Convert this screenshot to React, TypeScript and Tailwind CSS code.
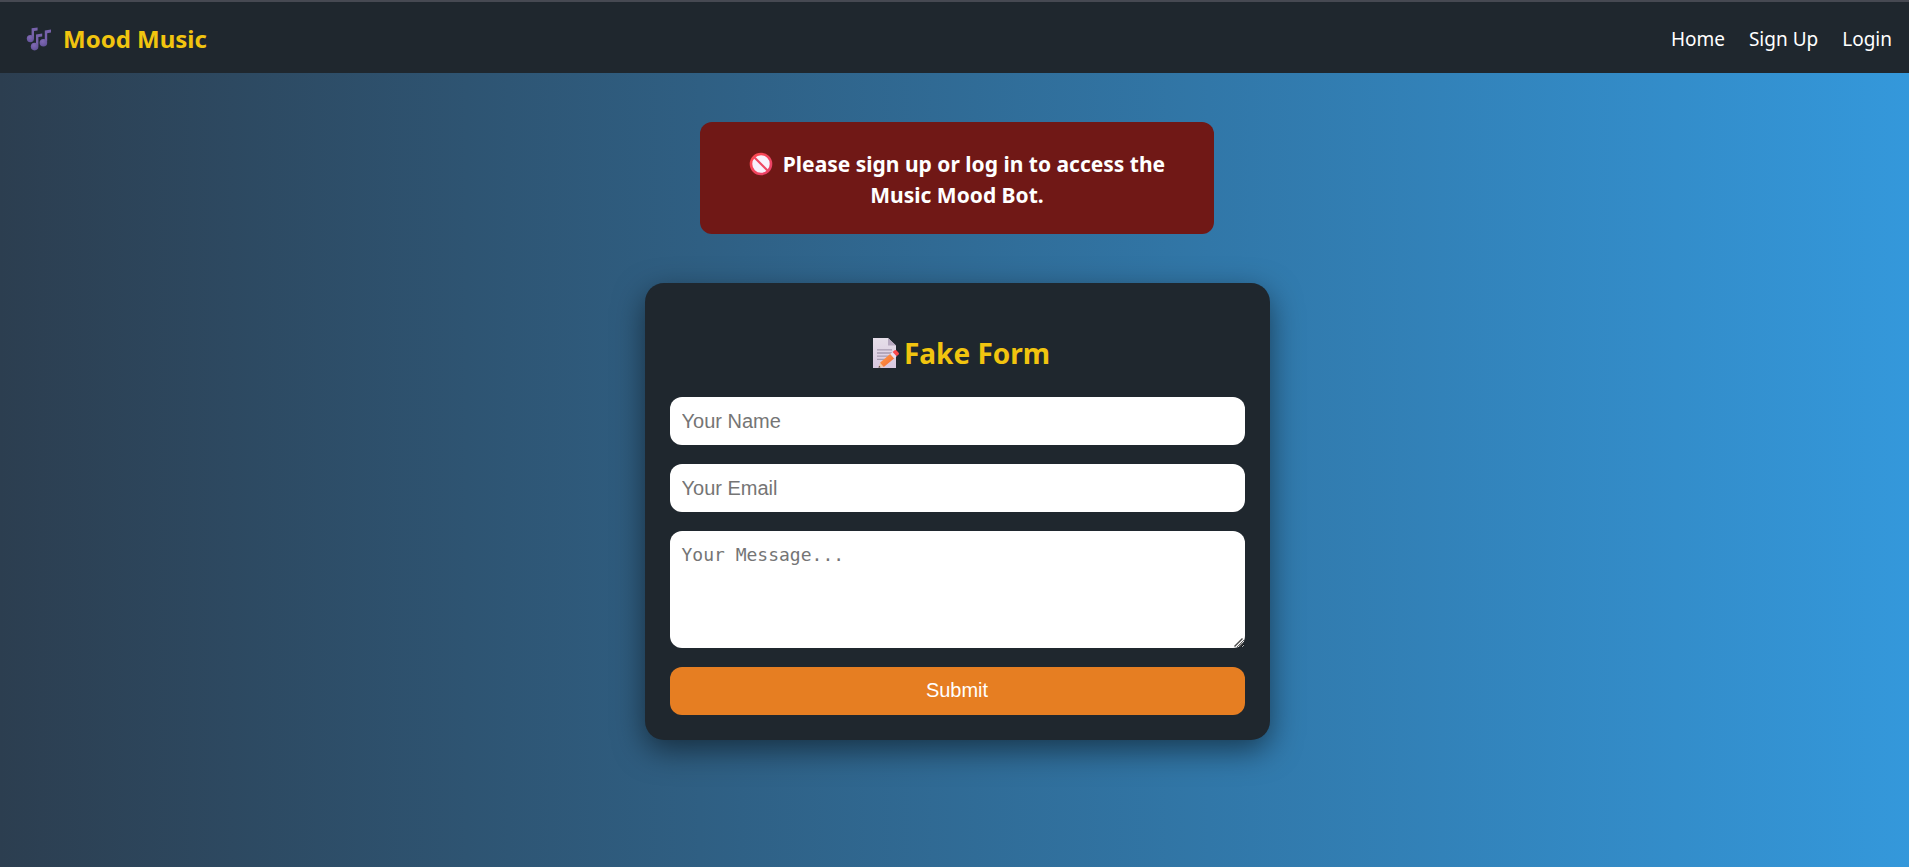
import type { ReactNode } from "react";

function NotesIcon() {
  return (
    <svg viewBox="0 0 26 26" className="h-[26px] w-[26px] shrink-0" aria-hidden="true">
      <defs>
        <radialGradient id="note" cx="0.4" cy="0.3" r="0.8">
          <stop offset="0" stopColor="#8069b4" />
          <stop offset="1" stopColor="#5f5096" />
        </radialGradient>
      </defs>
      <path d="M6.6 2.2 L12.6 1.4 V4.4 L9 5 V12.6 H6.6 Z" fill="#7762ab" />
      <path d="M11 8.4 L17.2 7.4 V10.4 L13.4 11 V19.5 H11 Z" fill="#7762ab" />
      <path d="M19.8 4.6 L26 3.4 V6.4 L22.2 7.2 V15.6 H19.8 Z" fill="#7762ab" />
      <circle cx="5.4" cy="12.6" r="3.6" fill="url(#note)" />
      <circle cx="9.6" cy="20.6" r="3.8" fill="url(#note)" />
      <circle cx="18.4" cy="16.8" r="3.8" fill="url(#note)" />
    </svg>
  );
}

function ProhibitedIcon() {
  return (
    <svg viewBox="0 0 24 24" className="h-6 w-6" aria-hidden="true">
      <defs>
        <linearGradient id="ring" x1="0" y1="0" x2="1" y2="1">
          <stop offset="0" stopColor="#ff4a4d" />
          <stop offset="1" stopColor="#e8406c" />
        </linearGradient>
      </defs>
      <circle cx="12" cy="12" r="10" fill="#f8f1fb" stroke="url(#ring)" strokeWidth="2.6" />
      <path d="M5 5 L19 19" stroke="#ee4660" strokeWidth="2.2" />
    </svg>
  );
}

function MemoIcon() {
  return (
    <svg viewBox="0 0 28 32" className="h-8 w-7 shrink-0" aria-hidden="true">
      <defs>
        <linearGradient id="paper" x1="0" y1="0" x2="0" y2="1">
          <stop offset="0" stopColor="#e6dfe9" />
          <stop offset="1" stopColor="#d9c8e0" />
        </linearGradient>
        <linearGradient id="pencil" x1="0" y1="0" x2="1" y2="1">
          <stop offset="0" stopColor="#ffa04a" />
          <stop offset="1" stopColor="#f4652f" />
        </linearGradient>
      </defs>
      <path d="M1 1 H16 L24 8.5 V31 H1 Z" fill="url(#paper)" />
      <path d="M16 1 V8.5 H24 Z" fill="#b7a9c0" />
      <path d="M5 12.8 H20 M5 16 H20 M5 19.2 H17 M5 22.4 H13" stroke="#a79bb0" strokeWidth="1.3" />
      <path d="M6.5 30.8 L8 26 L11.5 29.8 Z" fill="#f5c9a0" />
      <path d="M6.5 30.8 L7.1 28.8 L8.6 30.3 Z" fill="#4c3a45" />
      <path d="M8 25.8 L18.4 16.8 L22.4 21.2 L11.8 30 Z" fill="url(#pencil)" />
      <path d="M18.2 17 L20.6 14.9 L24.6 19.3 L22.2 21.4 Z" fill="#eadff0" />
      <path d="M20.6 14.9 L22.6 13.2 Q23.6 12.5 24.6 13.4 L26.8 15.9 Q27.4 16.9 26.6 17.6 L24.6 19.3 Z" fill="#fb4a4c" />
    </svg>
  );
}

function ResizeGrip() {
  return (
    <svg
      viewBox="0 0 12 12"
      className="pointer-events-none absolute right-0 bottom-0 h-3 w-3"
      aria-hidden="true"
    >
      <path d="M1.5 10.5 L9.5 2.5" stroke="#4a4a4a" strokeWidth="1.4" />
      <path d="M6.5 10.5 L10 7" stroke="#4a4a4a" strokeWidth="1.4" />
    </svg>
  );
}

function NavLink({ children }: { children: ReactNode }) {
  return (
    <a href="#" className="text-white hover:underline">
      {children}
    </a>
  );
}

const fieldClass =
  "block w-full rounded-xl bg-white px-3 text-black outline-none placeholder:text-[#757575]";

export default function App() {
  return (
    <div className="flex min-h-screen flex-col bg-linear-to-r/srgb from-[#2c3e50] to-[#3498db] font-['Noto_Sans',sans-serif] text-white">
      <header className="flex h-[73px] items-center justify-between border-t-2 border-[#464952] bg-[#1f272e] pt-[3px] pr-[17px] pl-[25px]">
        <div className="flex items-center gap-3 text-[24px] font-bold text-[#f1c40f]">
          <NotesIcon />
          <span>Mood Music</span>
        </div>
        <nav className="flex gap-6 text-[19px]">
          <NavLink>Home</NavLink>
          <NavLink>Sign Up</NavLink>
          <NavLink>Login</NavLink>
        </nav>
      </header>

      <main className="flex flex-1 flex-col items-center pt-[49px] pb-12 pl-[5px]">
        <div
          role="alert"
          className="w-full max-w-[514px] rounded-xl bg-[#701816] px-9 pt-[27px] pb-[23px] text-center text-[21px] leading-[31px] font-bold"
        >
          <span className="mr-[10px] inline-block align-[-4px]">
            <ProhibitedIcon />
          </span>
          Please sign up or log in to access the Music Mood Bot.
        </div>

        <form
          className="mt-[49px] flex w-full max-w-[625px] flex-col gap-[19px] rounded-[19px] bg-[#1f272e] px-[25px] pt-[50px] pb-[25px] shadow-[0_10px_31px_rgba(0,0,0,0.5)]"
          onSubmit={(event) => event.preventDefault()}
        >
          <h2 className="mb-[5px] flex items-center justify-center gap-1 pl-2 text-[28px] leading-10 font-bold text-[#f1c40f]">
            <MemoIcon />
            <span>Fake Form</span>
          </h2>
          <input
            type="text"
            aria-label="Your Name"
            placeholder="Your Name"
            className={`${fieldClass} h-12 font-['Liberation_Sans',sans-serif] text-[20px]`}
          />
          <input
            type="email"
            aria-label="Your Email"
            placeholder="Your Email"
            className={`${fieldClass} h-12 font-['Liberation_Sans',sans-serif] text-[20px]`}
          />
          <div className="relative">
            <textarea
              aria-label="Your Message"
              placeholder="Your Message..."
              className={`${fieldClass} h-[117px] resize-y py-3 font-['DejaVu_Sans_Mono',monospace] text-[18px] leading-6`}
            />
            <ResizeGrip />
          </div>
          <button
            type="submit"
            className="h-12 w-full cursor-pointer rounded-xl bg-[#e67e22] pb-[2px] font-['Liberation_Sans',sans-serif] text-[20px] text-white"
          >
            Submit
          </button>
        </form>
      </main>
    </div>
  );
}
